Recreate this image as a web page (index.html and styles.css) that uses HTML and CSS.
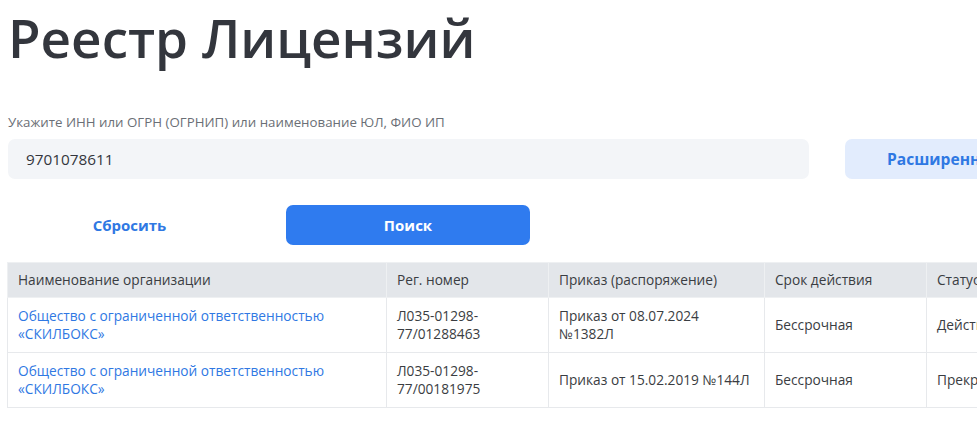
FILE: index.html
```html
<!DOCTYPE html>
<html lang="ru">
<head>
<meta charset="utf-8">
<title>Реестр Лицензий</title>
<link rel="stylesheet" href="styles.css">
</head>
<body>
<main class="page">
  <h1 class="title">Реестр Лицензий</h1>
  <label class="field-label" for="q">Укажите ИНН или ОГРН (ОГРНИП) или наименование ЮЛ, ФИО ИП</label>
  <div class="search-row">
    <input id="q" class="search-input" type="text" value="9701078611">
    <button class="btn btn-advanced">Расширенный поиск</button>
  </div>
  <div class="actions">
    <button class="btn btn-reset">Сбросить</button>
    <button class="btn btn-search">Поиск</button>
  </div>
  <table class="results">
    <thead>
      <tr>
        <th class="c-name">Наименование организации</th>
        <th class="c-reg">Рег. номер</th>
        <th class="c-order">Приказ (распоряжение)</th>
        <th class="c-term">Срок действия</th>
        <th class="c-status">Статус</th>
      </tr>
    </thead>
    <tbody>
      <tr>
        <td><a class="org" href="#">Общество с ограниченной ответственностью «СКИЛБОКС»</a></td>
        <td>Л035-01298-<br>77/01288463</td>
        <td>Приказ от 08.07.2024<br>№1382Л</td>
        <td>Бессрочная</td>
        <td>Действующая</td>
      </tr>
      <tr>
        <td><a class="org" href="#">Общество с ограниченной ответственностью «СКИЛБОКС»</a></td>
        <td>Л035-01298-<br>77/00181975</td>
        <td>Приказ от 15.02.2019 №144Л</td>
        <td>Бессрочная</td>
        <td>Прекращена</td>
      </tr>
    </tbody>
  </table>
</main>
</body>
</html>
```

FILE: styles.css
```css
html, body {
  margin: 0;
  padding: 0;
  overflow: hidden;
  background: #ffffff;
}
body {
  font-family: "Open Sans", "Noto Sans", sans-serif;
  color: #3a3d42;
}
.page {
  width: 1160px;
  padding: 0 0 0 8px;
}
.title {
  margin: 2px 0 0 0;
  font-size: 53px;
  line-height: 72px;
  font-weight: 600;
  color: #33363d;
}
.field-label {
  display: block;
  margin-top: 39px;
  font-size: 13.3px;
  line-height: 18px;
  color: #6b6f76;
}
.search-row {
  display: flex;
  align-items: flex-start;
  gap: 36px;
  margin-top: 8px;
}
.search-input {
  box-sizing: border-box;
  width: 801px;
  height: 40px;
  border: none;
  border-radius: 7px;
  background: #f3f5f8;
  padding: 0 18px;
  font-family: inherit;
  font-size: 15.3px;
  color: #33363d;
  outline: none;
}
.btn {
  box-sizing: border-box;
  height: 40px;
  border: none;
  border-radius: 7px;
  font-family: inherit;
  font-size: 15px;
  font-weight: 700;
  cursor: pointer;
  white-space: nowrap;
}
.btn-advanced {
  flex: none;
  padding: 0 42px;
  font-size: 15.6px;
  background: #e2ecfd;
  color: #2f78e3;
}
.actions {
  display: flex;
  gap: 35px;
  margin-top: 26px;
}
.btn-reset {
  width: 243px;
  background: transparent;
  color: #2f78e3;
}
.btn-search {
  width: 244px;
  background: #2f7bef;
  color: #ffffff;
}
.results {
  margin-top: 17px;
  margin-left: -1px;
  border-collapse: collapse;
  font-size: 13.7px;
  line-height: 18px;
}
.results th,
.results td {
  border: 1px solid #e7e9ec;
  padding: 9px 10px;
  text-align: left;
  vertical-align: middle;
  color: #3a3d42;
}
.results th {
  background: #e3e6ea;
  font-weight: 400;
  height: 17px;
  padding-top: 8px;
  padding-bottom: 8px;
  border-color: #eef0f2;
}
.c-name { width: 358px; }
.c-reg { width: 141px; }
.c-order { width: 195px; }
.c-term { width: 141px; }
.c-status { width: 200px; }
.org {
  color: #2f78e3;
  text-decoration: none;
}
```
